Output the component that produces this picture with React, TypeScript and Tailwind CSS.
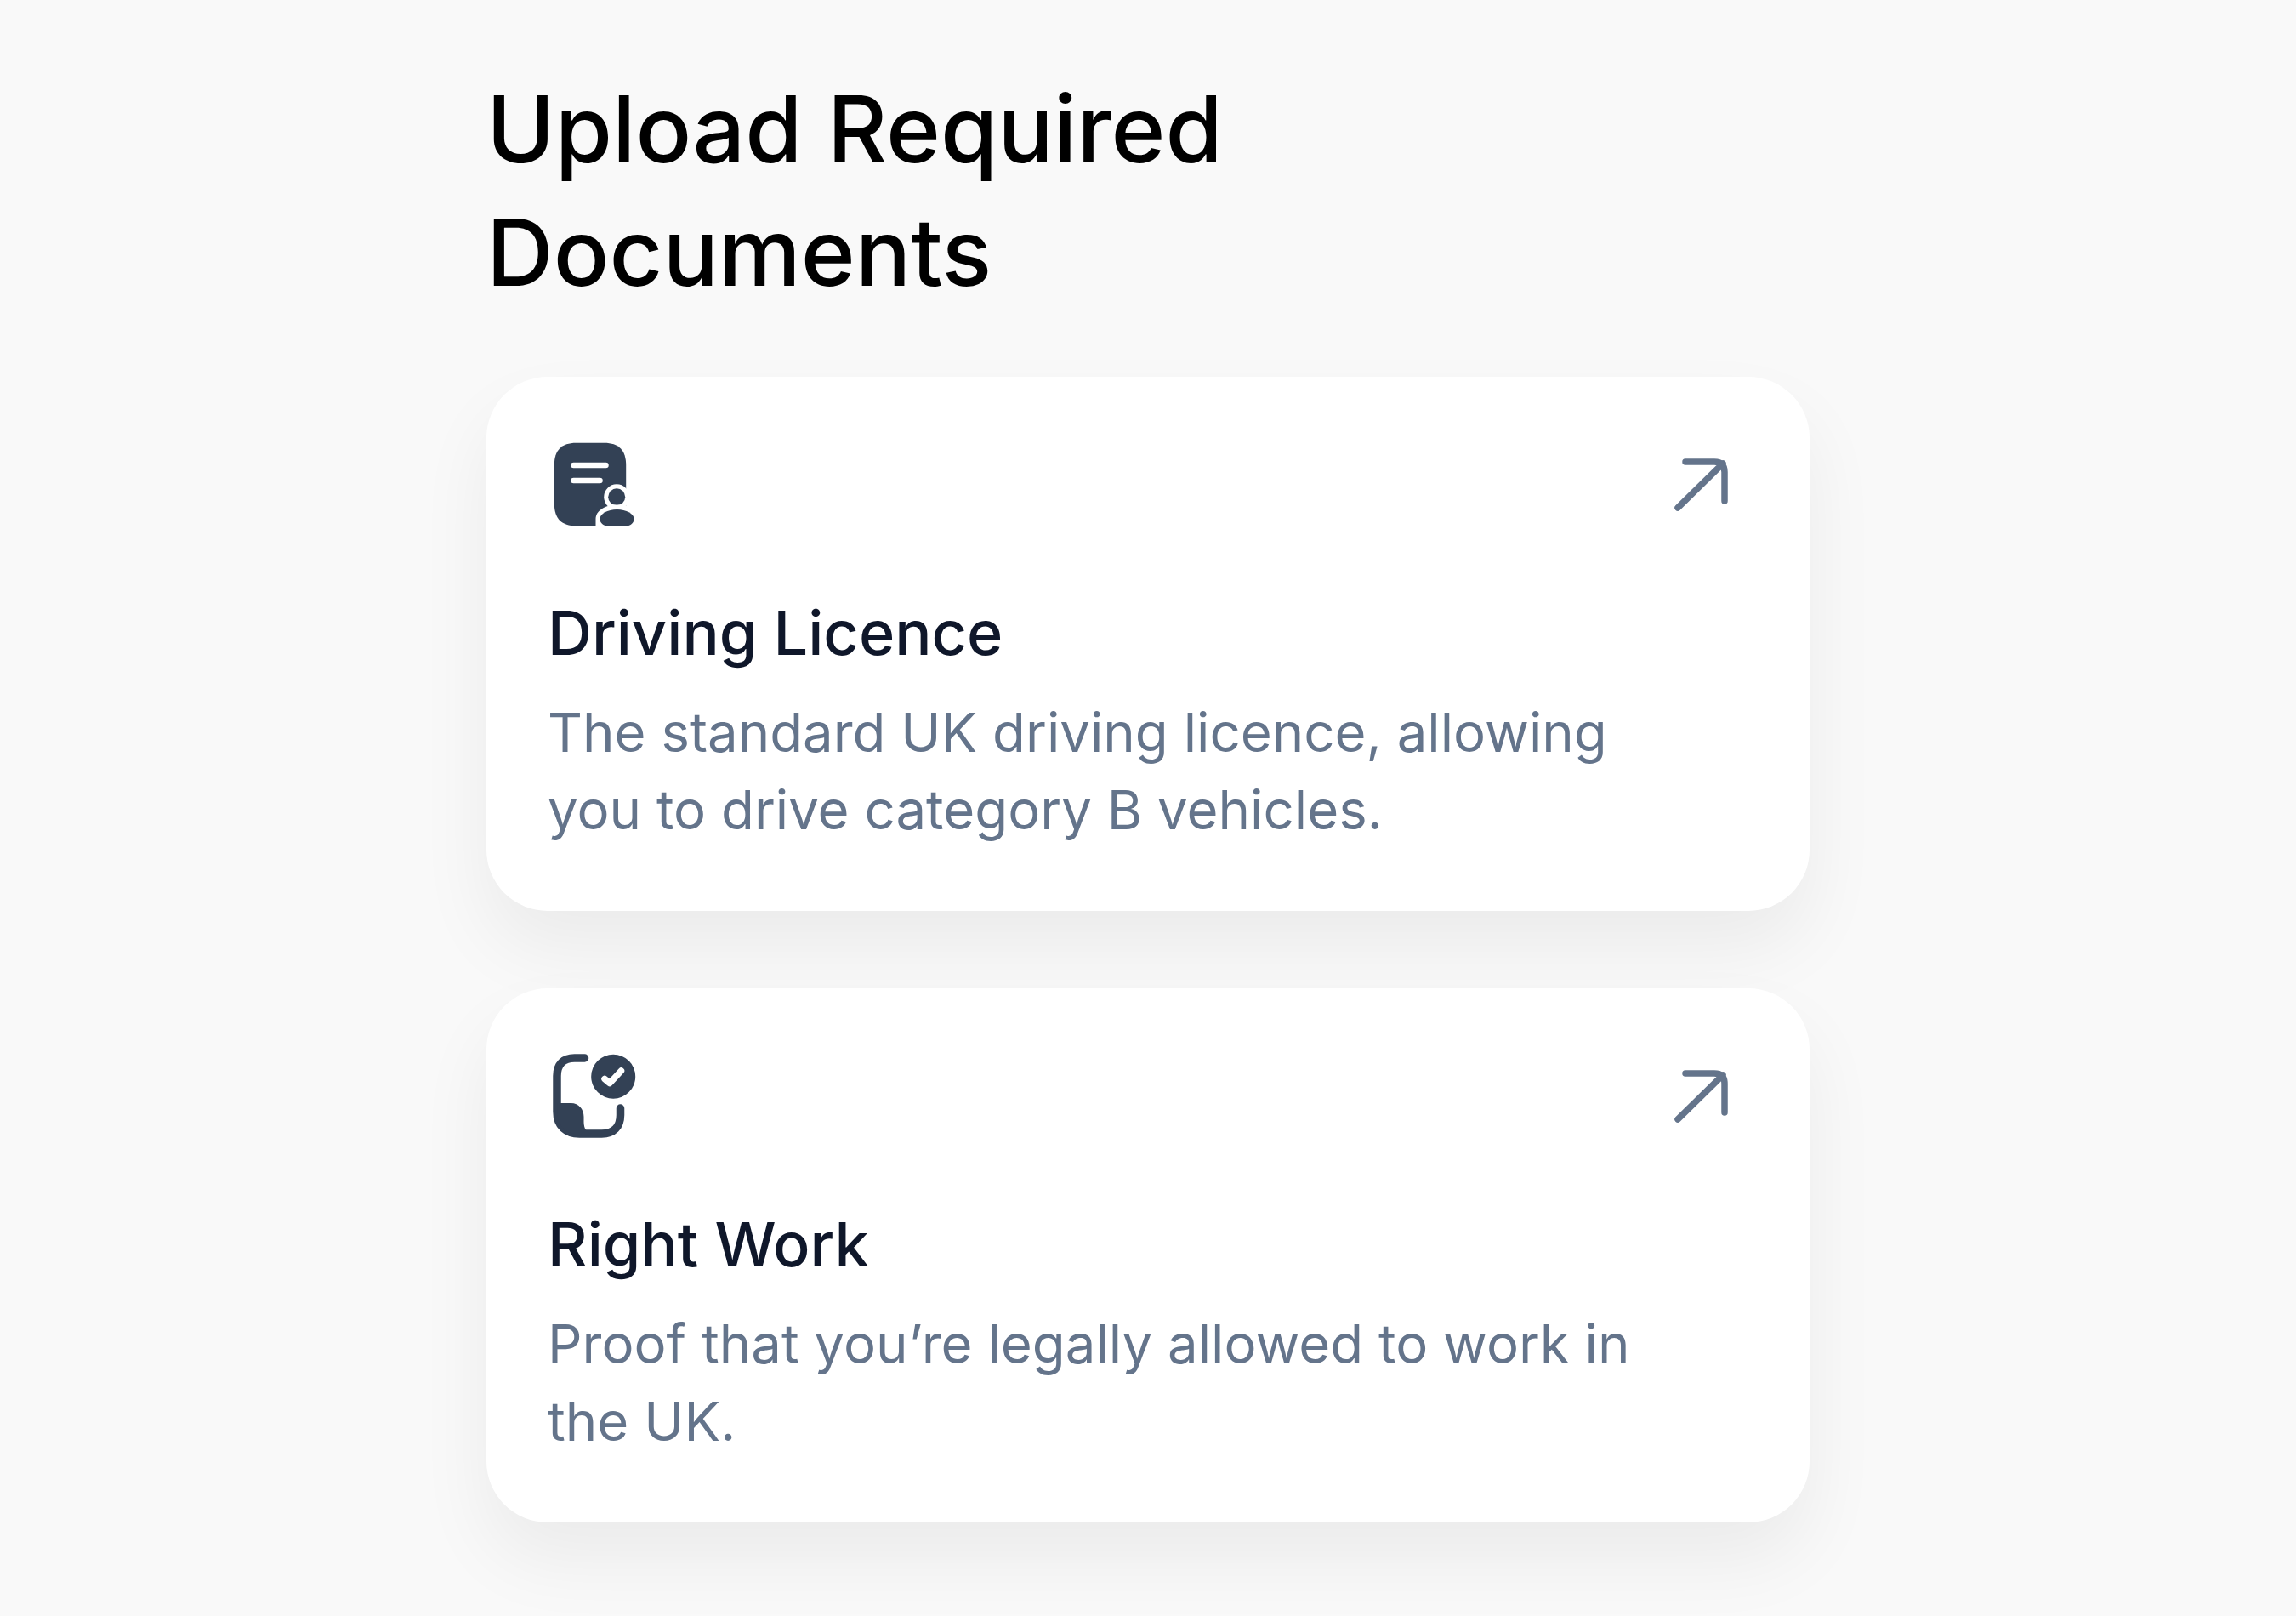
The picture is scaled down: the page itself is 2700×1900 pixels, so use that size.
const documents = [
  {
    id: "licence",
    title: "Driving Licence",
    description: "The standard UK driving licence, allowing you to drive category B vehicles.",
  },
  {
    id: "work",
    title: "Right Work",
    description: "Proof that you’re legally allowed to work in the UK.",
  },
];

function LicenceIcon() {
  return (
    <svg className="block w-[112px] h-[112px]" viewBox="24.5 35 112 112" fill="none">
      <path
        d="M58 40.7H91C108 40.7 116.7 49 116.7 67V112C116.7 130 108 138.3 91 138.3H58C41 138.3 32.3 130 32.3 112V67C32.3 49 41 40.7 58 40.7Z"
        fill="#334155"
      />
      <path d="M55 67H93M55 85H86" stroke="#fff" strokeWidth="6.5" strokeLinecap="round" />
      <circle cx="105.7" cy="104.3" r="15" fill="#fff" />
      <circle cx="105.7" cy="104.3" r="10" fill="#334155" />
      <path
        d="M81 143V130C81 120 93 113.5 106 113.5C119 113.5 131 120 131 130V143Z"
        fill="#fff"
      />
      <path
        d="M86 130C86 124 95 119 106 119C117 119 126 124 126 130C126 135 122 138.3 117 138.3H95C90 138.3 86 135 86 130Z"
        fill="#334155"
      />
    </svg>
  );
}

function RightWorkIcon() {
  return (
    <svg className="block w-[112px] h-[112px]" viewBox="24.5 35 112 112" fill="none">
      <path
        d="M68 45H56C43 45 35.5 52 35.5 66V108C35.5 125 46 134 62 134H88C102 134 110 126 110 112V104"
        stroke="#334155"
        strokeWidth="9.5"
        strokeLinecap="round"
      />
      <path d="M36 98H52C61 98 67 105 67 114V120C67 128 70 132 76 134H60C44 134 36 124 36 108Z" fill="#334155" />
      <circle cx="101.7" cy="66.7" r="26" fill="#334155" />
      <path
        d="M91.5 69.5L97.5 74.5L111 60"
        stroke="#fff"
        strokeWidth="7.5"
        strokeLinecap="round"
        strokeLinejoin="round"
      />
    </svg>
  );
}

function ArrowIcon() {
  return (
    <svg className="block w-[112px] h-[112px]" viewBox="0 0 112 112" fill="none">
      <path
        d="M29 82L82 30M38 28H72C80 28 84 32 84 40V74"
        stroke="#64748b"
        strokeWidth="7.5"
        strokeLinecap="round"
        strokeLinejoin="round"
      />
    </svg>
  );
}

export default function App() {
  return (
    <div className="min-h-[1900px] bg-[#f9f9f9] font-['Inter',sans-serif] pt-[79px] pl-[572px] overflow-hidden">
      <h1 className="text-[109px] leading-[145px] font-medium text-black max-w-[1000px] mb-[74px]">
        Upload Required Documents
      </h1>

      <div className="w-[1556px] flex flex-col gap-[91px]">
        {documents.map((doc) => (
          <div
            key={doc.id}
            className="h-[628px] bg-white rounded-[72px] px-[72px] pt-[72px] shadow-[0_44px_88px_rgba(0,0,0,0.06)]"
          >
            <div className="flex items-start justify-between">
              {doc.id === "licence" ? <LicenceIcon /> : <RightWorkIcon />}
              <ArrowIcon />
            </div>
            <h2 className="mt-[38px] pt-[29px] text-[72px] leading-[100px] font-medium text-[#0f172a]">{doc.title}</h2>
            <p className="mt-[21px] text-[63.5px] leading-[91px] text-[#64748b] max-w-[1340px]">{doc.description}</p>
          </div>
        ))}
      </div>
    </div>
  );
}
